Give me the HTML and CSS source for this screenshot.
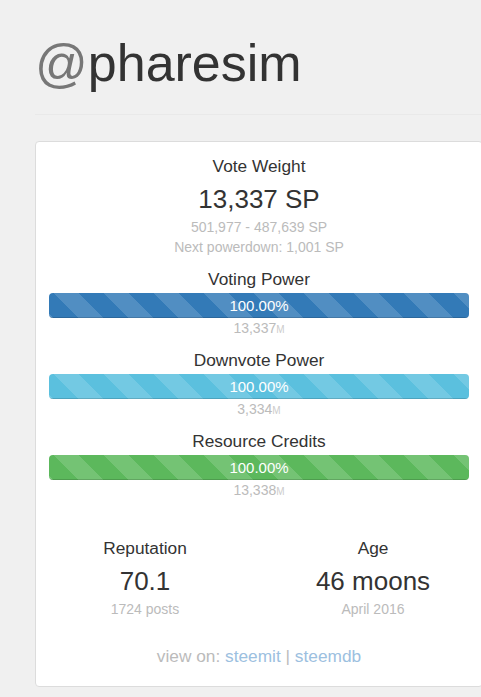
FILE: index.html
```html
<!DOCTYPE html>
<html lang="en">

  <head>
    <meta charset="UTF-8">
    <meta name="viewport" content="width=device-width, initial-scale=1.0">
    <title>@pharesim</title>
    <link rel="stylesheet" href="styles.css">
  </head>

  <body>
    <div class="container">
      <h1 class="username"><span class="at">@</span>pharesim</h1>
      <hr class="divider">

      <div class="panel">
        <div class="label">Vote Weight</div>
        <div class="big">13,337 SP</div>
        <div class="muted">501,977 - 487,639 SP</div>
        <div class="muted">Next powerdown: 1,001 SP</div>

        <div class="meter">
          <div class="label">Voting Power</div>
          <div class="progress">
            <div class="bar bar-primary" style="width: 100%">100.00%</div>
          </div>
          <div class="muted">13,337<small>M</small></div>
        </div>

        <div class="meter">
          <div class="label">Downvote Power</div>
          <div class="progress">
            <div class="bar bar-info" style="width: 100%">100.00%</div>
          </div>
          <div class="muted">3,334<small>M</small></div>
        </div>

        <div class="meter">
          <div class="label">Resource Credits</div>
          <div class="progress">
            <div class="bar bar-success" style="width: 100%">100.00%</div>
          </div>
          <div class="muted">13,338<small>M</small></div>
        </div>

        <div class="stats">
          <div class="stat">
            <div class="label">Reputation</div>
            <div class="big">70.1</div>
            <div class="muted">1724 posts</div>
          </div>
          <div class="stat">
            <div class="label">Age</div>
            <div class="big">46 moons</div>
            <div class="muted">April 2016</div>
          </div>
        </div>

        <div class="links">
          view on: <a href="#">steemit</a> | <a href="#">steemdb</a>
        </div>
      </div>
    </div>
  </body>

</html>
```

FILE: styles.css
```css
html,
body {
  overflow-x: hidden;
}

body {
  font-family: "Liberation Sans", Arial, sans-serif;
  background-color: #f0f0f0;
  color: #333;
  margin: 0;
}

.container {
  padding-left: 35px;
  width: 448px;
}

.username {
  font-size: 52px;
  font-weight: normal;
  line-height: 57px;
  margin: 35px 0 0 0;
  color: #333;
}

.username .at {
  color: #777;
}

.divider {
  border: 0;
  border-top: 1px solid #e9e9e9;
  margin: 22px 0 26px 0;
}

.panel {
  background-color: #fff;
  border: 1px solid #dcdcdc;
  border-radius: 4px;
  padding: 12px 13px 18px 13px;
  text-align: center;
}

.label {
  font-size: 17.3px;
  line-height: 24px;
  color: #333;
}

.big {
  font-size: 26px;
  line-height: 34px;
  margin-top: 4px;
  color: #333;
}

.muted {
  font-size: 14px;
  line-height: 20px;
  color: #bbb;
}

.big + .muted {
  margin-top: 1px;
}

.muted small {
  font-size: 10px;
  line-height: 10px;
  color: #ccc;
}

.meter {
  margin-top: 10px;
}

.progress {
  height: 25px;
  margin-top: 2px;
  background-color: #f5f5f5;
  border-radius: 4px;
  overflow: hidden;
}

.bar {
  height: 100%;
  color: #fff;
  font-size: 15px;
  line-height: 25px;
  box-shadow: inset 0 -1px 0 rgba(0, 0, 0, 0.15);
  background-image: linear-gradient(45deg, rgba(255, 255, 255, 0.15) 25%, transparent 25%, transparent 50%, rgba(255, 255, 255, 0.15) 50%, rgba(255, 255, 255, 0.15) 75%, transparent 75%, transparent);
  background-size: 50px 50px;
  background-position: 5px 0;
}

.bar-primary {
  background-color: #337ab7;
}

.bar-info {
  background-color: #5bc0de;
}

.bar-success {
  background-color: #5cb85c;
}

.stats {
  display: grid;
  grid-template-columns: 1fr 1fr;
  margin: 36px -18px 0 -18px;
}

.links {
  margin-top: 25px;
  font-size: 17.3px;
  line-height: 24px;
  color: #bbb;
}

.links a {
  color: #9cc0e0;
  text-decoration: none;
}
```
